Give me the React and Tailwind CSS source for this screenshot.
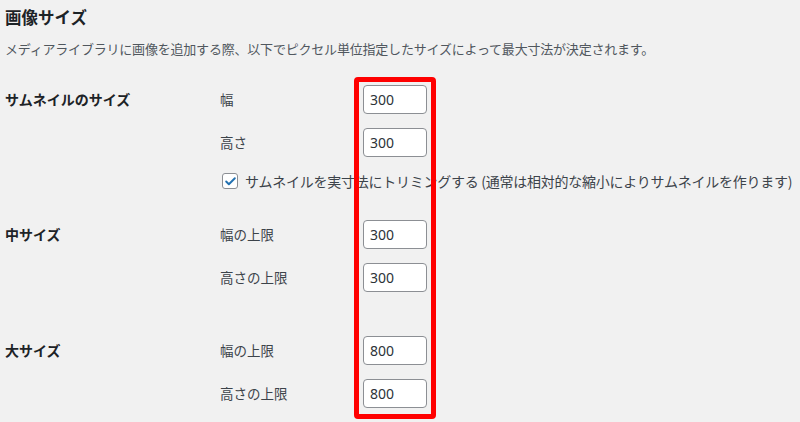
import { Check } from 'lucide-react'

const jp = { fontFamily: '"Noto Sans CJK JP", "Noto Sans", sans-serif' }

function SizeInput({ value }) {
  return (
    <div
      className="w-[64px] h-[29px] bg-white border border-[#8c8f94] rounded-[4px] flex items-center pl-[6px] text-[14px] text-[#2c3338]"
      style={{ fontFamily: '"Noto Sans", "Open Sans", sans-serif' }}
    >
      {value}
    </div>
  )
}

function Row({ label, sub, value }) {
  return (
    <div className="flex items-center h-[29px]">
      <div className="w-[215px] text-[14px] font-bold text-[#1d2327]">{label}</div>
      <div className="w-[143px] text-[13.5px] text-[#3c434a]">{sub}</div>
      <SizeInput value={value} />
    </div>
  )
}

export default function App() {
  return (
    <div className="relative w-[800px] h-[422px] bg-[#f1f1f1] overflow-hidden pl-[5px]" style={jp}>
      {/* 見出し */}
      <h2 className="pt-[4px] h-[26px] leading-[26px] text-[16.5px] font-bold text-[#1d2327]">画像サイズ</h2>
      <p className="mt-[13px] leading-[20px] text-[13px] text-[#50575e] tracking-[-0.2px]">
        メディアライブラリに画像を追加する際、以下でピクセル単位指定したサイズによって最大寸法が決定されます。
      </p>

      {/* サムネイル */}
      <div className="mt-[26px]">
        <Row label="サムネイルのサイズ" sub="幅" value="300" />
        <div className="mt-[14px]">
          <Row label="" sub="高さ" value="300" />
        </div>
        <div className="mt-[16px] ml-[217px] flex items-center h-[16px]">
          <div className="w-[16px] h-[16px] bg-white border border-[#8c8f94] rounded-[3px] flex items-center justify-center">
            <Check size={13} strokeWidth={3.5} className="text-[#2271b1]" />
          </div>
          <span className="ml-[7px] text-[14px] text-[#3c434a] whitespace-nowrap tracking-[-0.25px]">
            サムネイルを実寸法にトリミングする (通常は相対的な縮小によりサムネイルを作ります)
          </span>
        </div>
      </div>

      {/* 中サイズ */}
      <div className="mt-[31px]">
        <Row label="中サイズ" sub="幅の上限" value="300" />
        <div className="mt-[14px]">
          <Row label="" sub="高さの上限" value="300" />
        </div>
      </div>

      {/* 大サイズ */}
      <div className="mt-[44px]">
        <Row label="大サイズ" sub="幅の上限" value="800" />
        <div className="mt-[14px]">
          <Row label="" sub="高さの上限" value="800" />
        </div>
      </div>

      {/* 赤枠 */}
      <div className="absolute left-[354px] top-[77px] w-[82px] h-[342px] border-[5px] border-[#ff0000] rounded-[4px] pointer-events-none" />
    </div>
  )
}
